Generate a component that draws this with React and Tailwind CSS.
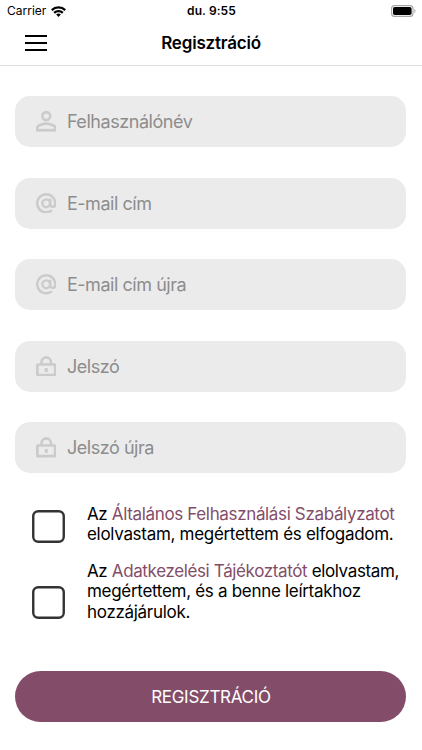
// Registration screen
function UserIcon() {
  return (
    <svg viewBox="4 4 16 16" fill="currentColor" stroke="currentColor" strokeWidth="0.15" className="size-[20.5px]">
      <path d="M12 5.9a2.1 2.1 0 1 1 0 4.2 2.1 2.1 0 0 1 0-4.2m0 9c2.97 0 6.1 1.46 6.1 2.1v1.1H5.9V17c0-.64 3.13-2.1 6.1-2.1M12 4C9.79 4 8 5.79 8 8s1.79 4 4 4 4-1.79 4-4-1.79-4-4-4zm0 9c-2.67 0-8 1.34-8 4v3h16v-3c0-2.66-5.33-4-8-4z" />
    </svg>
  );
}

function AtIcon() {
  return (
    <svg viewBox="0 0 20 20" fill="none" stroke="currentColor" strokeWidth="2.4" strokeLinecap="round" className="size-[20.5px]">
      <circle cx="10" cy="10" r="3.8" />
      <path d="M13.8 6.6v4.3c0 3.5 5 3.5 5-.2V10a8.8 8.8 0 1 0-4 7.4" />
    </svg>
  );
}

function LockIcon() {
  return (
    <svg viewBox="0 0 20 20" fill="none" stroke="currentColor" strokeWidth="2.6" className="size-[20.5px]">
      <rect x="1.3" y="8.3" width="17.4" height="10.4" rx="0.6" />
      <path d="M5.4 8.4V6a4.6 4.6 0 0 1 9.2 0v2.4" />
      <rect x="8.5" y="11.6" width="3" height="4" rx="0.7" fill="currentColor" stroke="none" />
    </svg>
  );
}

const fields = [
  { label: 'Felhasználónév', Icon: UserIcon },
  { label: 'E-mail cím', Icon: AtIcon },
  { label: 'E-mail cím újra', Icon: AtIcon },
  { label: 'Jelszó', Icon: LockIcon },
  { label: 'Jelszó újra', Icon: LockIcon },
];

function StatusBar() {
  return (
    <div className="grid h-[22px] grid-cols-3 items-center pr-[6px] pl-[7px] text-[12px] leading-none">
      <div className="flex items-center gap-[5px]">
        <span>Carrier</span>
        <svg viewBox="0 0 15 11" fill="none" stroke="black" strokeWidth="2.3" className="h-[11px] w-[15px]">
          <path d="M.8 4.1a9.6 9.6 0 0 1 13.4 0" />
          <path d="M3.2 6.8a6.2 6.2 0 0 1 8.6 0" />
          <path d="M7.5 10.9 5.2 8.6a3.3 3.3 0 0 1 4.6 0z" fill="black" stroke="none" />
        </svg>
      </div>
      <div className="text-center font-semibold tracking-[0.1px]">du. 9:55</div>
      <svg viewBox="0 0 25 12" className="h-[12px] w-[25px] justify-self-end">
        <rect x=".6" y=".6" width="21.4" height="10.8" rx="3" fill="white" stroke="#a6a6a6" strokeWidth="1.1" />
        <rect x="2" y="2" width="18.6" height="8" rx="1.7" fill="black" />
        <path d="M23.4 4.1c1.5.6 1.5 3.2 0 3.8z" fill="#a6a6a6" />
      </svg>
    </div>
  );
}

function Field({ label, Icon }) {
  return (
    <div className="flex h-[51px] items-center rounded-[15px] bg-[#ebebeb] pl-[20.5px]">
      <span className="text-[#cbcbcb]"><Icon /></span>
      <span className="ml-[10.5px] text-[18px] tracking-[-0.45px] text-[#8d8d8d]">{label}</span>
    </div>
  );
}

function Checkbox() {
  return (
    <svg viewBox="0 0 33 33" className="size-[33px] shrink-0">
      <rect x="1.25" y="1.25" width="30.5" height="30.5" rx="5" fill="white" stroke="#333" strokeWidth="2.4" />
    </svg>
  );
}

export default function App() {
  return (
    <div className="h-[750px] w-[422px] overflow-hidden bg-white font-['Inter',sans-serif] text-black">
      <StatusBar />

      <header className="grid h-[44px] grid-cols-3 items-center border-b border-[#dedede]">
        <button className="mb-[1px] ml-[25px] flex w-[22px] flex-col gap-[5px]">
          <span className="h-[2px] bg-black" />
          <span className="h-[2px] bg-black" />
          <span className="h-[2px] bg-black" />
        </button>
        <h1 className="text-center text-[17px] font-semibold tracking-[-0.2px]">Regisztráció</h1>
      </header>

      <main className="pt-[30px] pr-[15.6px] pl-[15.4px]">
        <div className="flex flex-col gap-[30.5px]">
          {fields.map((field) => (
            <Field key={field.label} {...field} />
          ))}
        </div>

        <div className="mt-[31px] ml-[16.6px] flex flex-col gap-[16px] text-[17px] leading-[20.4px] whitespace-nowrap">
          <div className="flex gap-[22px]">
            <div className="pt-[5.5px]"><Checkbox /></div>
            <p className="tracking-[-0.3px]">
              <span className="tracking-[-0.35px]">
                Az <span className="text-[#834d69]">Általános Felhasználási Szabályzatot</span>
              </span>
              <br />
              elolvastam, megértettem és elfogadom.
            </p>
          </div>
          <div className="flex gap-[22px]">
            <div className="pt-[25px]"><Checkbox /></div>
            <p className="tracking-[-0.3px]">
              <span className="tracking-[-0.37px]">
                Az <span className="text-[#834d69]">Adatkezelési Tájékoztatót</span> elolvastam,
              </span>
              <br />
              megértettem, és a benne leírtakhoz
              <br />
              hozzájárulok.
            </p>
          </div>
        </div>

        <button className="mt-[49px] h-[51px] w-full rounded-full bg-[#834d69] pt-[3px] text-[17px] tracking-[-0.3px] text-white">
          REGISZTRÁCIÓ
        </button>
      </main>
    </div>
  );
}
